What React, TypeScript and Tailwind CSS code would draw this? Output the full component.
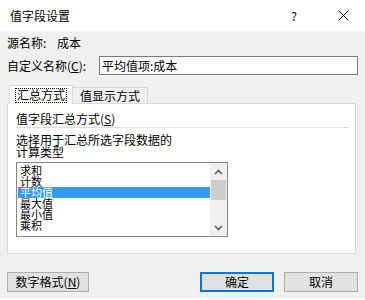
const FONT = "font-['Noto_Sans_CJK_SC','Noto_Sans',sans-serif]";

const items = ['求和', '计数', '平均值', '最大值', '最小值', '乘积'];

function Chevron({ up }: { up?: boolean }) {
  return (
    <svg width="9" height="6" viewBox="0 0 9 6" className="block">
      <path
        d={up ? 'M1 5 L4.5 1.5 L8 5' : 'M1 1 L4.5 4.5 L8 1'}
        fill="none"
        stroke="#606060"
        strokeWidth={1.6}
      />
    </svg>
  );
}

export default function App() {
  return (
    <div className={`w-[365px] h-[300px] bg-white text-[12px] text-black ${FONT} flex flex-col`}>
      {/* title bar */}
      <div className="h-[31px] shrink-0 flex items-center pl-[10px]">
        <span className="flex-1 text-[12px]">值字段设置</span>
        <span className="w-[10px] text-center text-[12px] mr-[39px]">?</span>
        <svg width="11" height="11" viewBox="0 0 11 11" className="mr-[16px]">
          <path d="M0.5 0.5 L10.5 10.5 M10.5 0.5 L0.5 10.5" stroke="#000" strokeWidth={1} />
        </svg>
      </div>

      {/* body */}
      <div className="h-[267px] shrink-0 bg-[#f0f0f0] flex flex-col">
        <div className="h-[16px] mt-[4px] flex items-center pl-[7px] leading-none">
          <span className="w-[50px]">源名称:</span>
          <span>成本</span>
        </div>
        <div className="h-[19px] mt-[5px] flex items-center pl-[7px] leading-none">
          <span className="w-[92px]">
            自定义名称(<u>C</u>):
          </span>
          <div className="w-[259px] h-[19px] bg-white border border-[#7a7a7a] flex items-center px-[2px]">
            平均值项:成本
          </div>
        </div>

        {/* tabs */}
        <div className="mt-[10px] h-[18px] flex items-end pl-[9px] leading-none">
          <div className="w-[64px] h-[19px] bg-white border border-b-0 border-[#d9d9d9] flex items-center justify-center relative z-10 -mb-px">
            <span className="border border-dotted border-black px-[1px] h-[15px] flex items-center">汇总方式</span>
          </div>
          <div className="w-[75px] h-[16px] bg-[#f0f0f0] border border-b-0 border-l-0 border-[#d9d9d9] flex items-center justify-center">
            值显示方式
          </div>
        </div>

        {/* panel */}
        <div className="ml-[7px] w-[349px] h-[151px] bg-white border border-[#d9d9d9] flex flex-col pl-[8px] leading-none">
          <div className="h-[14px] mt-[8px] flex items-center">
            值字段汇总方式(<u>S</u>)
          </div>
          <div className="w-[333px] h-px bg-[#dcdcdc] mt-[1px]" />
          <div className="mt-[6px] leading-[12px]">
            <div className="h-[12px]">选择用于汇总所选字段数据的</div>
            <div className="h-[12px]">计算类型</div>
          </div>
          <div className="mt-[4px] w-[212px] h-[75px] border border-[#828790] flex">
            <div className="flex-1 overflow-hidden pt-[2px] pl-[1px]">
              {items.map((it) => (
                <div
                  key={it}
                  className={`h-[11px] leading-[11px] text-[11px] pl-[2px] whitespace-nowrap ${
                    it === '平均值' ? 'bg-[#3399ff] text-white' : ''
                  }`}
                >
                  {it}
                </div>
              ))}
            </div>
            <div className="w-[17px] bg-[#f0f0f0] flex flex-col items-center">
              <div className="h-[17px] flex items-center justify-center">
                <Chevron up />
              </div>
              <div className="w-[15px] h-[20px] bg-[#cdcdcd]" />
              <div className="flex-1" />
              <div className="h-[17px] flex items-center justify-center">
                <Chevron />
              </div>
            </div>
          </div>
        </div>

        {/* buttons */}
        <div className="mt-[18px] h-[20px] flex items-center px-[7px] leading-none">
          <button className="w-[82px] h-[20px] bg-[#e1e1e1] border border-[#adadad] flex items-center justify-center">
            数字格式(<u>N</u>)
          </button>
          <div className="flex-1" />
          <button className="w-[74px] h-[20px] bg-[#e1e1e1] border-2 border-[#0078d7] flex items-center justify-center">
            确定
          </button>
          <button className="ml-[10px] w-[74px] h-[20px] bg-[#e1e1e1] border border-[#adadad] flex items-center justify-center">
            取消
          </button>
        </div>
      </div>
    </div>
  );
}
